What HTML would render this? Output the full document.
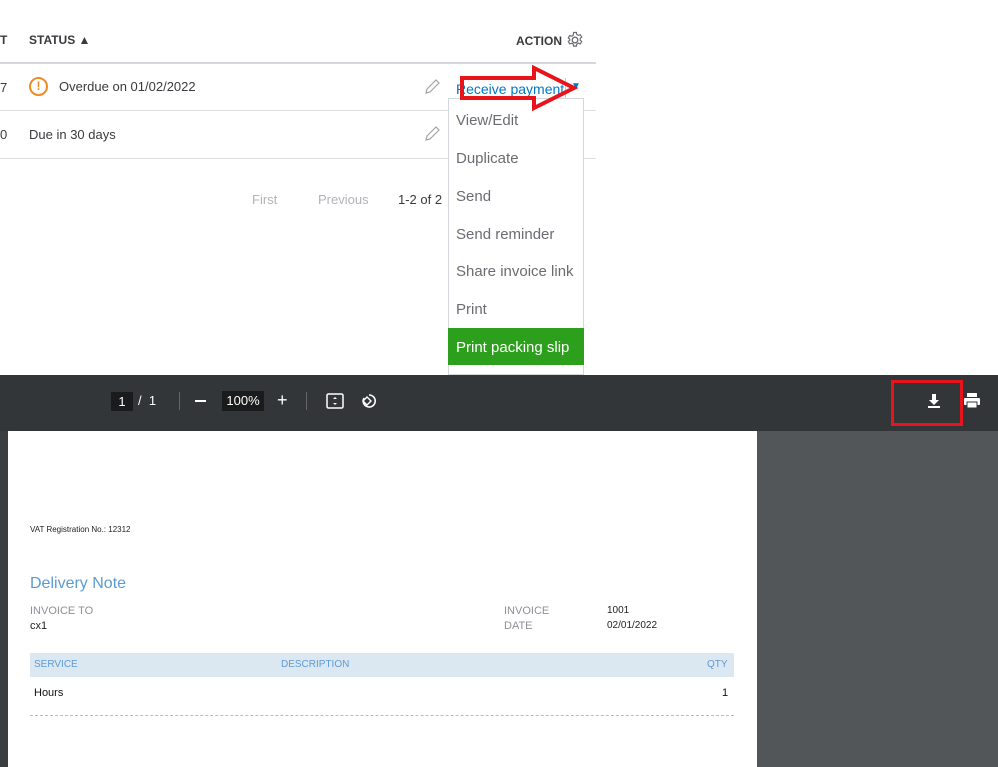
<!DOCTYPE html>
<html><head><style>
body{margin:0;width:998px;height:767px;position:relative;overflow:hidden;background:#fff;font-family:"Liberation Sans",sans-serif}
.a{position:absolute;white-space:nowrap}
.hd{font-size:12px;font-weight:bold;color:#393a3d}
.t{font-size:13px;color:#393a3d}
.mi{position:absolute;left:456px;font-size:15px;color:#6b6c72}
.p{font-size:11px;color:#8d9096}
</style></head><body>
<div class="a hd" style="left:0;top:33px">T</div>
<div class="a hd" style="left:29px;top:33px">STATUS ▲</div>
<div class="a hd" style="left:516px;top:34px">ACTION</div>
<svg class="a" style="left:566px;top:31px" width="18" height="18" viewBox="0 0 18 18"><circle cx="9" cy="9" r="2.8" fill="none" stroke="#6b6c72" stroke-width="1.3"/><path d="M7.6 1.5h2.8l.4 2 1.6.9 1.9-.7 1.4 2.4-1.5 1.3v1.8l1.5 1.3-1.4 2.4-1.9-.7-1.6.9-.4 2H7.6l-.4-2-1.6-.9-1.9.7-1.4-2.4 1.5-1.3V8.2L2.3 6.9l1.4-2.4 1.9.7 1.6-.9z" fill="none" stroke="#6b6c72" stroke-width="1.2"/></svg>
<div class="a" style="left:0;top:62px;width:596px;height:2px;background:#d4d7dc"></div>
<div class="a t" style="left:0;top:80px">7</div>
<div class="a" style="left:29px;top:77px;width:19px;height:19px;border:2px solid #f08a24;border-radius:50%;box-sizing:border-box;color:#f08a24;font-size:12px;font-weight:bold;text-align:center;line-height:15px">!</div>
<div class="a t" style="left:59px;top:79px">Overdue on 01/02/2022</div>
<div class="a" style="left:0;top:110px;width:596px;height:1px;background:#dcdee2"></div>
<div class="a t" style="left:0;top:127px">0</div>
<div class="a t" style="left:29px;top:127px">Due in 30 days</div>
<div class="a" style="left:0;top:158px;width:596px;height:1px;background:#dcdee2"></div>
<svg class="a" style="left:423px;top:78px" width="18" height="18"><path d="M3 15l1-4 9-9 3 3-9 9z" fill="none" stroke="#a0a3a8" stroke-width="1.2"/></svg>
<svg class="a" style="left:423px;top:125px" width="18" height="18"><path d="M3 15l1-4 9-9 3 3-9 9z" fill="none" stroke="#a0a3a8" stroke-width="1.2"/></svg>
<div class="a" style="left:456px;top:81px;font-size:14px;color:#0077c5">Receive payment</div>
<div class="a" style="left:565px;top:78px;width:1px;height:20px;background:#ccc"></div>
<div class="a" style="left:571px;top:81px;font-size:10px;color:#0077c5">▼</div>
<div class="a" style="left:252px;top:192px;font-size:13px;color:#b0b3b8">First</div>
<div class="a" style="left:318px;top:192px;font-size:13px;color:#b0b3b8">Previous</div>
<div class="a" style="left:398px;top:192px;font-size:13px;color:#393a3d">1-2 of 2</div>
<div class="a" style="left:448px;top:98px;width:136px;height:277px;background:#fff;border:1px solid #d4d7dc;box-sizing:border-box"></div>
<div class="mi" style="top:112px">View/Edit</div>
<div class="mi" style="top:150px">Duplicate</div>
<div class="mi" style="top:188px">Send</div>
<div class="mi" style="top:226px">Send reminder</div>
<div class="mi" style="top:263px">Share invoice link</div>
<div class="mi" style="top:301px">Print</div>
<div class="a" style="left:448px;top:328px;width:136px;height:37px;background:#2ca01c"></div>
<div class="mi" style="top:339px;color:#fff">Print packing slip</div>
<svg class="a" style="left:458px;top:64px" width="122" height="48"><polygon points="4,14 76,14 76,4 116,24 76,44 76,34 4,34" fill="none" stroke="#e8141c" stroke-width="4"/></svg>
<div class="a" style="left:0;top:375px;width:998px;height:56px;background:#323639"></div>
<div class="a" style="left:111px;top:392px;width:22px;height:19px;background:#191b1c;color:#fff;font-size:13px;text-align:center;line-height:19px">1</div>
<div class="a" style="left:138px;top:393px;color:#fff;font-size:13px">/ &nbsp;1</div>
<div class="a" style="left:179px;top:392px;width:1px;height:18px;background:#666"></div>
<div class="a" style="left:195px;top:400px;width:11px;height:2px;background:#fff"></div>
<div class="a" style="left:222px;top:391px;width:42px;height:20px;background:#191b1c;color:#fff;font-size:13px;text-align:center;line-height:20px">100%</div>
<div class="a" style="left:277px;top:390px;color:#fff;font-size:18px">+</div>
<div class="a" style="left:306px;top:392px;width:1px;height:18px;background:#666"></div>
<svg class="a" style="left:326px;top:393px" width="18" height="16"><rect x="1" y="1" width="16" height="14" rx="1.5" fill="none" stroke="#fff" stroke-width="1.5"/><path d="M9 4l-2 2h4zM9 12l-2-2h4z" fill="#fff"/></svg>
<svg class="a" style="left:360px;top:392px" width="18" height="18"><path d="M9 3a6 6 0 1 1-5 3" fill="none" stroke="#fff" stroke-width="1.6"/><path d="M3 9l4-4 4 4-4 4z" fill="none" stroke="#fff" stroke-width="1.4"/></svg>
<svg class="a" style="left:926px;top:393px" width="16" height="16"><path d="M6 1h4v6h3l-5 5-5-5h3z" fill="#fff"/><rect x="2" y="13" width="12" height="2" fill="#fff"/></svg>
<div class="a" style="left:891px;top:380px;width:72px;height:46px;border:3px solid #e8141c;box-sizing:border-box"></div>
<svg class="a" style="left:963px;top:393px" width="18" height="16"><rect x="4" y="0" width="10" height="4" fill="#fff"/><rect x="1" y="5" width="16" height="7" rx="1" fill="#fff"/><rect x="4" y="9" width="10" height="6" fill="#fff" stroke="#323639" stroke-width="1"/></svg>
<div class="a" style="left:0;top:431px;width:998px;height:336px;background:#525659"></div>
<div class="a" style="left:0;top:431px;width:8px;height:336px;background:#3b3e41"></div>
<div class="a" style="left:8px;top:431px;width:749px;height:336px;background:#fff"></div>
<div class="a" style="left:30px;top:525px;font-size:8px;color:#222">VAT Registration No.: 12312</div>
<div class="a" style="left:30px;top:575px;font-size:16px;color:#5b9bd5">Delivery Note</div>
<div class="a p" style="left:30px;top:605px">INVOICE TO</div>
<div class="a" style="left:30px;top:620px;font-size:11px;color:#222">cx1</div>
<div class="a p" style="left:504px;top:605px">INVOICE</div>
<div class="a p" style="left:504px;top:620px">DATE</div>
<div class="a" style="left:607px;top:605px;font-size:10px;color:#222">1001</div>
<div class="a" style="left:607px;top:620px;font-size:10px;color:#222">02/01/2022</div>
<div class="a" style="left:30px;top:653px;width:704px;height:24px;background:#dce8f1"></div>
<div class="a" style="left:34px;top:659px;font-size:10px;color:#5b9bd5">SERVICE</div>
<div class="a" style="left:281px;top:659px;font-size:10px;color:#5b9bd5">DESCRIPTION</div>
<div class="a" style="left:707px;top:659px;font-size:10px;color:#5b9bd5">QTY</div>
<div class="a" style="left:34px;top:687px;font-size:11px;color:#111">Hours</div>
<div class="a" style="left:722px;top:687px;font-size:11px;color:#111">1</div>
<div class="a" style="left:30px;top:715px;width:704px;border-top:1px dashed #bbb"></div>
</body></html>
